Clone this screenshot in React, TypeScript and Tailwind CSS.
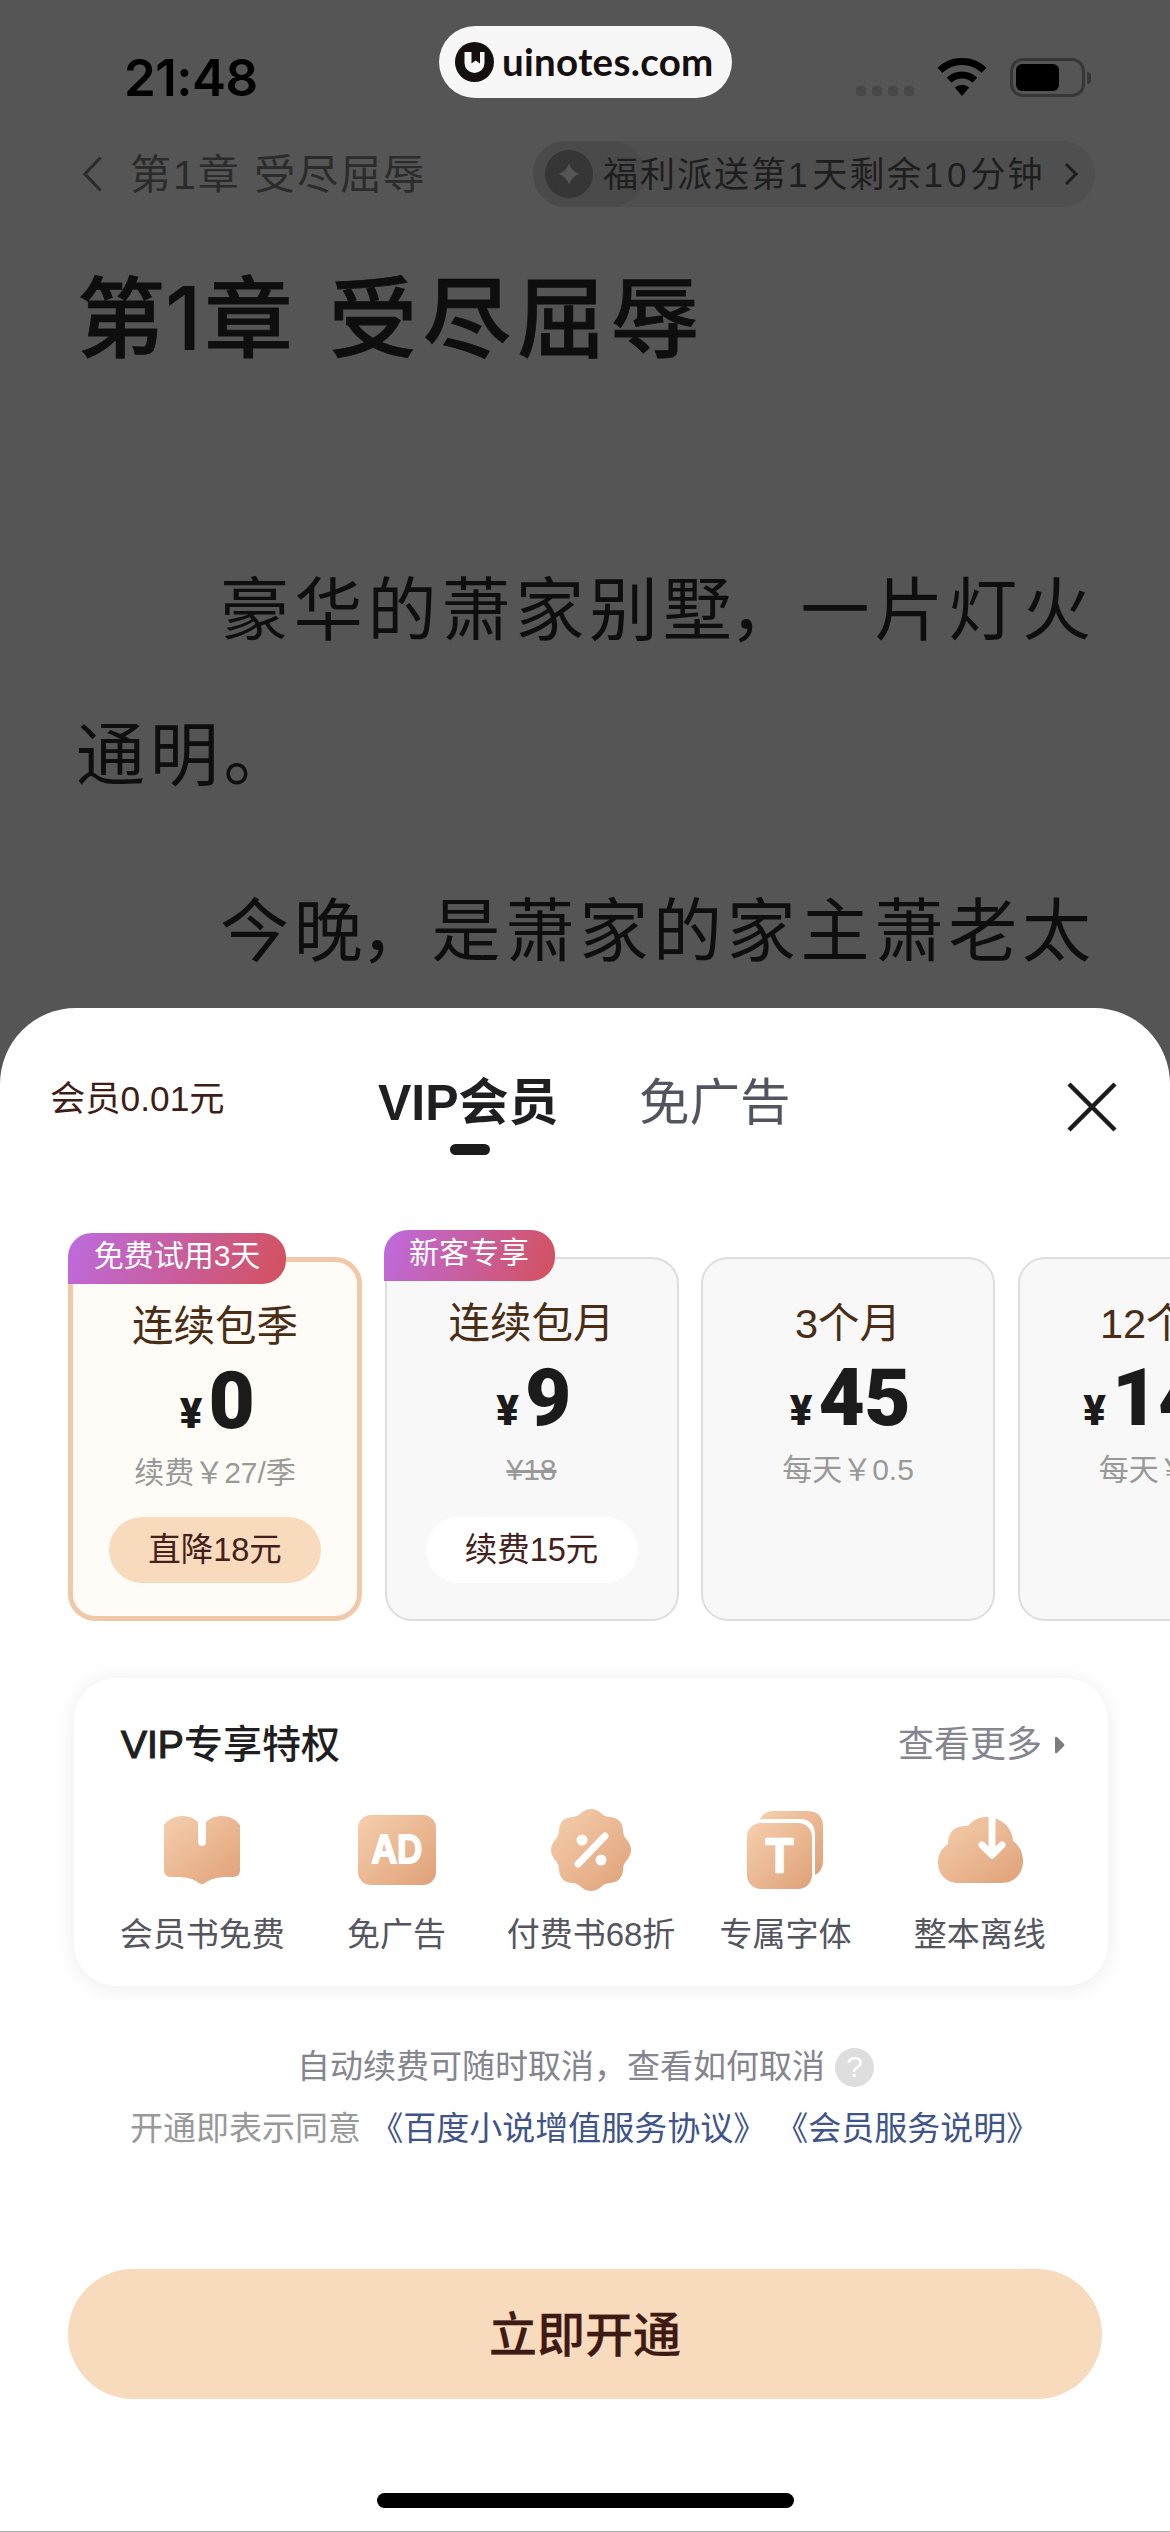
import type { ReactNode } from "react";

interface Plan {
  badge?: string;
  badgeClass?: string;
  name: string;
  price: string;
  note: string;
  strike?: boolean;
  action?: string;
  active?: boolean;
}

const plans: Plan[] = [
  { badge: "免费试用3天", badgeClass: "-top-[29px] -left-[5px] w-[218px]", name: "连续包季", price: "0", note: "续费￥27/季", action: "直降18元", active: true },
  { badge: "新客专享", badgeClass: "-top-[29px] -left-[3px] w-[171px]", name: "连续包月", price: "9", note: "¥18", strike: true, action: "续费15元" },
  { name: "3个月", price: "45", note: "每天￥0.5" },
  { name: "12个月", price: "148", note: "每天￥0.4" },
];

function StatusBar() {
  return (
    <div className="flex h-[124px] items-start text-black">
      <div className="w-[439px] pt-[52px] pl-[124px] font-['Inter'] text-[51px] leading-[52px] font-semibold tracking-[-0.5px]">
        21:48
      </div>
      <div className="mt-[26px] flex h-[72px] w-[293px] items-center rounded-full bg-[#f7f7f7] pl-4 text-[#15100f]">
        <svg width="39" height="40" viewBox="0 0 39 40">
          <ellipse cx="19.5" cy="20" rx="19.5" ry="20" fill="#15100f" />
          <path d="M9.500 10h7v11.500l4.200-3 4.300 3V10h4.500v11a10 10 0 0 1-20 0z" fill="#f7f7f7" />
        </svg>
        <span className="mb-[2px] ml-[8px] font-['Lato'] text-[38.5px] leading-[44px] font-bold tracking-[0.3px]">uinotes.com</span>
      </div>
      <div className="mt-[86px] ml-[124px] flex gap-[6px]">
        {[0, 1, 2, 3].map((i) => (
          <span key={i} className="size-[10px] rounded-[4px] bg-[#474747]" />
        ))}
      </div>
      <svg className="mt-[58px] ml-[23px]" width="50" height="39" viewBox="0 0 50 39">
        <path d="M25 38l-7.2-8.4a10.5 10.5 0 0 1 14.4 0z" />
        <path d="M12.2 22.2a18.5 18.5 0 0 1 25.6 0" fill="none" stroke="#000" strokeWidth="7" />
        <path d="M2.9 12.3a32 32 0 0 1 44.2 0" fill="none" stroke="#000" strokeWidth="7" />
      </svg>
      <div className="mt-[58px] ml-[23px] flex items-center">
        <div className="h-[39px] w-[75px] rounded-[13px] border-[3px] border-[#373737] p-[3px]">
          <div className="h-[27px] w-[43px] rounded-[6px] bg-black" />
        </div>
        <div className="ml-[2px] h-[12px] w-[4px] rounded-r-full bg-[#373737]" />
      </div>
    </div>
  );
}

function Reader() {
  return (
    <div className="h-[1008px] overflow-hidden">
      <StatusBar />
      <div className="flex h-[100px] items-center pl-[82px]">
        <svg width="20" height="36" viewBox="0 0 20 36" fill="none" stroke="#2b2b2b" strokeWidth="3.2">
          <path d="M18.500 1.500L3 18l15.500 16.500" />
        </svg>
        <span className="ml-[28px] w-[403px] pt-[3px] text-[41px] tracking-[2px] whitespace-nowrap text-[#2b2b2b]">
          第1章 受尽屈辱
        </span>
        <div className="flex h-[66px] w-[562px] items-center rounded-full bg-[#4f4f4f] text-[#1e1e1e]">
          <div className="flex h-[66px] w-[112px] shrink-0 items-center rounded-full bg-[#4a4a4a] pl-3">
            <svg width="48" height="48" viewBox="0 0 48 48">
              <circle cx="24" cy="24" r="24" fill="#363636" />
              <path d="M24 13.500q2.500 8 10.500 10.500q-8 2.500-10.500 10.500q-2.500-8-10.500-10.500q8-2.500 10.500-10.500z" fill="#555" />
            </svg>
          </div>
          <span className="-ml-[42px] pt-[2px] text-[35px] tracking-[2px] whitespace-nowrap">
            福利派送第<span className="tracking-[5px]">1</span>天剩余<span className="tracking-[4px]">10</span>分钟
          </span>
          <svg className="ml-[20px] shrink-0" width="15" height="24" viewBox="0 0 15 24" fill="none" stroke="#1e1e1e" strokeWidth="3">
            <path d="M2 2l10 10L2 22" />
          </svg>
        </div>
      </div>
      <h1 className="mt-[42px] pl-[77px] text-[88px] leading-[104px] font-medium tracking-[6px] text-[#0e0e0e] [-webkit-text-stroke:0.8px_#0e0e0e]">
        第<span className="-ml-[6px] font-['Inter'] tracking-[3px] [-webkit-text-stroke:0px]">1</span>章 受尽屈辱
      </h1>
      <div className="mt-[167px] pl-[76px] text-[69px] leading-[145px] tracking-[4.8px] whitespace-nowrap text-[#0e0e0e]">
        <p className="pl-[144px]">豪华的萧家别墅<span className="-ml-[7px] tracking-[2px]">，</span>一片灯火</p>
        <p>通明。</p>
        <p className="mt-[31px] pl-[144px]">今晚<span className="-ml-[7px] tracking-[2px]">，</span>是萧家的家主萧老太</p>
      </div>
    </div>
  );
}

function PlanCard({ plan }: { plan: Plan }) {
  return (
    <div
      className={`relative flex h-[364px] w-[294px] shrink-0 flex-col items-center rounded-[27px] ${
        plan.active ? "border-[5px] border-[#f1c9a9] bg-[#fffcf7]" : "border-2 border-[#dddede] bg-[#f8f8f8]"
      }`}
    >
      {plan.badge && (
        <div
          className={`absolute flex h-[51px] items-center justify-center rounded-[24px] rounded-bl-none bg-linear-[110deg,#bd6be0,#d4515c] pb-[6px] text-[30px] text-white ${plan.badgeClass}`}
        >
          {plan.badge}
        </div>
      )}
      <div className="mt-[38px] text-[41.5px] leading-[54px] whitespace-nowrap text-[#4a2d15]">{plan.name}</div>
      <div className="mt-[4px] flex h-[86px] items-baseline pl-[4px] font-['Roboto'] font-black text-[#1b1b1b]">
        <span className="mr-[6px] text-[42px] leading-none">¥</span>
        <span className="text-[80px] leading-[86px] tracking-[-0.5px]">{plan.price}</span>
      </div>
      <div className={`-mt-px text-[30px] leading-[60px] whitespace-nowrap text-[#999] ${plan.strike ? "line-through" : ""}`}>
        {plan.note}
      </div>
      {plan.action && (
        <div
          className={`flex h-[66px] w-[212px] items-center justify-center rounded-full text-[32.5px] text-[#43201a] ${
            plan.active ? "mt-[14px] bg-[#f8dabd]" : "mt-[17px] bg-white"
          }`}
        >
          {plan.action}
        </div>
      )}
    </div>
  );
}

function IconBox({ children }: { children: ReactNode }) {
  return (
    <svg width="90" height="90" viewBox="0 0 90 90">
      {children}
    </svg>
  );
}

const perks = [
  {
    label: "会员书免费",
    icon: (
      <IconBox>
        <path
          fill="url(#peach)"
          d="M7 20c4-6 12-9 19-9 6 0 11 2 15 6v20a4 4 0 0 0 8 0V17c4-4 9-6 15-6 7 0 15 3 19 9v45q0 7-7 7h-6c-9 0-17 2-22 6q-3 2-6 0c-5-4-13-6-22-6h-6q-7 0-7-7z"
        />
      </IconBox>
    ),
  },
  {
    label: "免广告",
    icon: (
      <IconBox>
        <rect x="6" y="10" width="78" height="70" rx="13" fill="url(#peach)" />
        <text
          x="19.500"
          y="58"
          textLength="51"
          lengthAdjust="spacingAndGlyphs"
          className="font-['Inter'] text-[38px] font-semibold"
          fill="#fff"
          stroke="#fff"
          strokeWidth="2"
          strokeLinejoin="round"
        >
          AD
        </text>
      </IconBox>
    ),
  },
  {
    label: "付费书68折",
    icon: (
      <IconBox>
        <path
          fill="url(#peach)"
          d="M35 8q10-8 20 0q4 4 9 4q12 1 13 13q0 6 4 10q8 10 0 20q-4 4-4 10q-1 12-13 13q-5 0-9 4q-10 8-20 0q-4-4-9-4q-12-1-13-13q0-6-4-10q-8-10 0-20q4-4 4-10q1-12 13-13q5 0 9-4z"
        />
        <path d="M32 59l27-28" stroke="#fff" strokeWidth="7" strokeLinecap="round" />
        <circle cx="36" cy="35" r="5.500" fill="#fff" />
        <circle cx="55" cy="55" r="5.500" fill="#fff" />
      </IconBox>
    ),
  },
  {
    label: "专属字体",
    icon: (
      <IconBox>
        <path fill="url(#peach)" d="M20 14.500q4-8.500 14-8.500h33q16 0 16 16v34q0 10-8 14V30q0-16-16-16H30q-6 0-10 .5z" />
        <rect x="7" y="18" width="65" height="66" rx="14" fill="url(#peach)" />
        <text
          x="39.500"
          y="67"
          textAnchor="middle"
          className="font-['Inter'] text-[45px] font-semibold"
          fill="#fff"
          stroke="#fff"
          strokeWidth="2.500"
          strokeLinejoin="round"
        >
          T
        </text>
      </IconBox>
    ),
  },
  {
    label: "整本离线",
    icon: (
      <IconBox>
        <path
          fill="url(#peach)"
          d="M23 78C11 78 3 69 3 57c0-8 4-14 10-18 0-13 8-19 20-18 5-6 11-9 18-9 15 0 26 10 27 24 6 4 10 11 10 20 0 13-9 22-21 22z"
        />
        <path d="M57 10v38" stroke="#fff" strokeWidth="7" />
        <path d="M47 40l10 10 10-10" fill="none" stroke="#fff" strokeWidth="7" strokeLinecap="round" strokeLinejoin="round" />
      </IconBox>
    ),
  },
];

function Perks() {
  return (
    <section className="mt-[57px] ml-[74px] h-[308px] w-[1034px] rounded-[42px] bg-white shadow-[0_2px_22px_rgba(0,0,0,0.08)]">
      <div className="flex items-center justify-between pt-[40px] pr-[43px] pl-[47px]">
        <h2 className="text-[39px] leading-[54px] font-medium text-[#1f1f22]">
          <span className="[-webkit-text-stroke:1.2px_#1f1f22]">VIP</span>专享特权
        </h2>
        <div className="flex items-center text-[36px] leading-[54px] text-[#858590]">
          查看更多
          <svg className="ml-[13px]" width="10" height="18" viewBox="0 0 10 18">
            <path d="M0 2q0-2 2-1l7 7q1 1 0 2l-7 7q-2 1-2-1z" fill="#7d7d80" />
          </svg>
        </div>
      </div>
      <div className="mt-[33px] ml-[31px] grid w-[972px] grid-cols-5">
        {perks.map((perk) => (
          <div key={perk.label} className="flex flex-col items-center">
            {perk.icon}
            <span className="mt-[15px] text-[33px] leading-[50px] whitespace-nowrap text-[#54555f]">{perk.label}</span>
          </div>
        ))}
      </div>
    </section>
  );
}

export default function App() {
  return (
    <div className="h-[2532px] w-[1170px] overflow-hidden bg-[#555] font-['Liberation_Sans','Noto_Sans_CJK_SC',sans-serif]">
      <svg className="absolute" width="0" height="0">
        <linearGradient id="peach" x1="0" y1="0" x2="1" y2="1">
          <stop offset="0" stopColor="#f6cfae" />
          <stop offset="1" stopColor="#dfa178" />
        </linearGradient>
      </svg>
      <Reader />
      <main className="flex h-[1524px] flex-col rounded-t-[76px] border-b border-[#aaa] bg-white">
        <header className="flex h-[249px] items-start pt-[60px]">
          <span className="w-[378px] pt-[6px] pl-[50px] text-[35.3px] leading-[50px] text-[#3f1d17]">会员0.01元</span>
          <div className="flex w-[261px] flex-col">
            <span className="text-[50px] leading-[70px] font-bold text-[#1f1f22]">VIP会员</span>
            <span className="mt-[6px] ml-[72px] h-[11px] w-[40px] rounded-full bg-[#1b1b1b]" />
          </div>
          <span className="w-[427px] text-[50.5px] leading-[70px] text-[#525460]">免广告</span>
          <svg className="mt-[13px]" width="52" height="52" viewBox="0 0 52 52" stroke="#1b1b1b" strokeWidth="4.500">
            <path d="M3 3l46 46M49 3L3 49" />
          </svg>
        </header>
        <div className="flex shrink-0 gap-[22.500px] pl-[68px]">
          {plans.map((plan) => (
            <PlanCard key={plan.name} plan={plan} />
          ))}
        </div>
        <Perks />
        <div className="mt-[56px] text-[33px] leading-[50px] whitespace-nowrap">
          <div className="flex items-center pl-[297px] text-[#858590]">
            自动续费可随时取消，查看如何取消
            <span className="ml-[10px] flex size-[39px] items-center justify-center rounded-full bg-[#dedede] text-[30px] text-white">?</span>
          </div>
          <p className="mt-[12px] pl-[130px] text-[#999]">
            开通即表示同意 <span className="text-[#3f5489]">《百度小说增值服务协议》 《会员服务说明》</span>
          </p>
        </div>
        <button className="mx-auto mt-[115px] h-[130px] w-[1034px] shrink-0 rounded-full bg-[#f8dabd] pt-[3px] text-[48px] font-medium text-[#3f1a14] [-webkit-text-stroke:0.3px_#3f1a14]">
          立即开通
        </button>
        <div className="mx-auto mt-[94px] h-[15px] w-[417px] rounded-full bg-black" />
      </main>
    </div>
  );
}
